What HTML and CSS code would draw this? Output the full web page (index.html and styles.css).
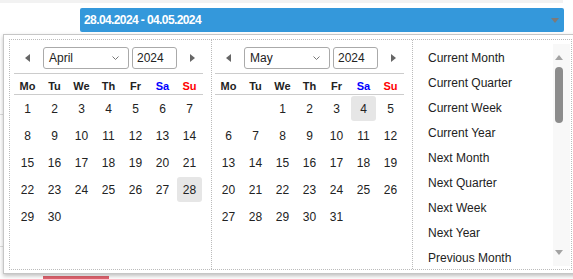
FILE: index.html
```html
<!DOCTYPE html>
<html lang="en">

<head>
  <meta charset="UTF-8">
  <meta name="viewport" content="width=device-width, initial-scale=1.0">
  <title>Date Range Picker</title>
  <link rel="stylesheet" href="styles.css">
</head>

<body>
  <div class="topbar"></div>
  <div class="range">
    <span class="range-text">28.04.2024 - 04.05.2024</span>
    <span class="range-caret"></span>
  </div>
  <div class="rows">
    <div class="row row-a"></div>
    <div class="row row-b"></div>
    <div class="btn-red"></div>
  </div>

  <!-- dropdown panel -->
  <div class="popup">
    <div class="frame">
      <div class="cal">
        <div class="nav">
          <span class="nav-btn"><span class="tri-left"></span></span>
          <div class="sel month">
            <span>April</span>
            <svg width="7" height="4" viewBox="0 0 7 4"><polyline points="0.5,0.5 3.5,3.5 6.5,0.5" fill="none" stroke="#777" stroke-width="1"/></svg>
          </div>
          <div class="sel year">2024</div>
          <span class="nav-btn next"><span class="tri-right"></span></span>
        </div>
        <div class="names">
          <span>Mo</span><span>Tu</span><span>We</span><span>Th</span><span>Fr</span><span class="sa">Sa</span><span class="su">Su</span>
        </div>
        <div class="days">
          <span>1</span><span>2</span><span>3</span><span>4</span><span>5</span><span>6</span><span>7</span>
          <span>8</span><span>9</span><span>10</span><span>11</span><span>12</span><span>13</span><span>14</span>
          <span>15</span><span>16</span><span>17</span><span>18</span><span>19</span><span>20</span><span>21</span>
          <span>22</span><span>23</span><span>24</span><span>25</span><span>26</span><span>27</span><span class="picked">28</span>
          <span>29</span><span>30</span>
        </div>
      </div>

      <div class="cal">
        <div class="nav">
          <span class="nav-btn"><span class="tri-left"></span></span>
          <div class="sel month">
            <span>May</span>
            <svg width="7" height="4" viewBox="0 0 7 4"><polyline points="0.5,0.5 3.5,3.5 6.5,0.5" fill="none" stroke="#777" stroke-width="1"/></svg>
          </div>
          <div class="sel year">2024</div>
          <span class="nav-btn next"><span class="tri-right"></span></span>
        </div>
        <div class="names">
          <span>Mo</span><span>Tu</span><span>We</span><span>Th</span><span>Fr</span><span class="sa">Sa</span><span class="su">Su</span>
        </div>
        <div class="days">
          <span></span><span></span><span>1</span><span>2</span><span>3</span><span class="picked">4</span><span>5</span>
          <span>6</span><span>7</span><span>8</span><span>9</span><span>10</span><span>11</span><span>12</span>
          <span>13</span><span>14</span><span>15</span><span>16</span><span>17</span><span>18</span><span>19</span>
          <span>20</span><span>21</span><span>22</span><span>23</span><span>24</span><span>25</span><span>26</span>
          <span>27</span><span>28</span><span>29</span><span>30</span><span>31</span>
        </div>
      </div>

      <div class="presets">
        <ul class="preset-list">
          <li>Current Month</li>
          <li>Current Quarter</li>
          <li>Current Week</li>
          <li>Current Year</li>
          <li>Next Month</li>
          <li>Next Quarter</li>
          <li>Next Week</li>
          <li>Next Year</li>
          <li>Previous Month</li>
        </ul>
        <div class="scroll">
          <span class="scroll-up"></span>
          <span class="scroll-thumb"></span>
          <span class="scroll-down"></span>
        </div>
      </div>
    </div>
  </div>
</body>

</html>
```

FILE: styles.css
```css
html,
body {
  margin: 0;
  padding: 0;
  overflow: hidden;
}

body {
  font-family: "Liberation Sans", Arial, sans-serif;
  color: #222;
  background: #fff;
}

.topbar {
  height: 3px;
  width: 563px;
  background: #f2f2f2;
}

.range {
  margin: 5px 0 0 80px;
  width: 484px;
  height: 24px;
  box-sizing: border-box;
  padding: 0 5px 0 4px;
  background: #3498db;
  border-radius: 2px;
  display: flex;
  align-items: center;
  justify-content: space-between;
  color: #fff;
}

.range-text {
  font-size: 12px;
  font-weight: bold;
  letter-spacing: -0.6px;
}

.range-caret {
  width: 0;
  height: 0;
  border-left: 4px solid transparent;
  border-right: 4px solid transparent;
  border-top: 5px solid #7d7a78;
}

/* page content behind the dropdown */
.row {
  border-bottom: 1px solid #ddd;
}

.row-a {
  height: 82px;
}

.row-b {
  height: 131px;
}

.btn-red {
  margin: 29px 0 0 43px;
  width: 66px;
  height: 4px;
  background: #e0636f;
}

/* dropdown */
.popup {
  position: absolute;
  top: 34px;
  left: 3px;
  padding: 4px 5px 3px;
  background: #fff;
  border: 1px solid #c6c6c6;
  box-shadow: 0 2px 4px rgba(0, 0, 0, 0.25);
}

.frame {
  display: flex;
  width: 561px;
  height: 229px;
  border: 1px dotted #bbb;
}

.cal {
  width: 189px;
  padding: 7px 8px 0 4px;
  border-right: 1px dotted #bbb;
}

.cal + .cal {
  padding-left: 3px;
}

.nav {
  display: flex;
  align-items: center;
  height: 22px;
  margin-bottom: 4px;
}

.nav-btn {
  width: 27px;
  height: 22px;
  display: flex;
  align-items: center;
  justify-content: center;
  flex-shrink: 0;
}

.nav-btn.next {
  width: 31px;
}

.tri-left,
.tri-right {
  width: 0;
  height: 0;
  border-top: 4px solid transparent;
  border-bottom: 4px solid transparent;
}

.tri-left {
  border-right: 5px solid #666;
}

.tri-right {
  border-left: 5px solid #666;
}

.sel {
  height: 22px;
  box-sizing: border-box;
  border: 1px solid #aaa;
  border-radius: 3px;
  font-size: 12px;
  line-height: 21px;
  color: #222;
  flex-shrink: 0;
}

.month {
  width: 86px;
  margin-left: 2px;
  padding: 0 9px 0 5px;
  display: flex;
  align-items: center;
  justify-content: space-between;
}

.year {
  width: 45px;
  margin-left: 3px;
  padding-left: 4px;
}

.names {
  display: grid;
  grid-template-columns: repeat(7, 27px);
  height: 17px;
  padding-top: 3px;
  border-top: 1px solid #ccc;
  border-bottom: 1px solid #ccc;
  font-size: 11px;
  font-weight: bold;
  line-height: 18px;
  text-align: center;
}

.names .sa {
  color: #0000ff;
}

.names .su {
  color: #ff0000;
}

.days {
  display: grid;
  grid-template-columns: repeat(7, 27px);
  grid-auto-rows: 27px;
  font-size: 12px;
  text-align: center;
}

.days span {
  margin: 1px;
  padding-top: 2px;
  height: 23px;
  line-height: 23px;
  border-radius: 3px;
}

.days .picked {
  background: #e6e6e6;
}

.presets {
  flex: 1;
  display: flex;
  min-width: 0;
}

.preset-list {
  flex: 1;
  list-style: none;
  margin: 0;
  padding: 6px 0 0 15px;
  overflow: hidden;
  font-size: 12px;
  color: #222;
}

.preset-list li {
  height: 25px;
  line-height: 25px;
  white-space: nowrap;
}

.scroll {
  width: 17px;
  margin: 4px 1px 3px 0;
  background: #f8f8f8;
  display: flex;
  flex-direction: column;
  align-items: flex-start;
}

.scroll-up,
.scroll-down {
  width: 0;
  height: 0;
  margin-left: 2px;
  border-left: 4.5px solid transparent;
  border-right: 4.5px solid transparent;
}

.scroll-up {
  margin-top: 11px;
  border-bottom: 5px solid #a3a3a3;
}

.scroll-thumb {
  width: 8px;
  height: 56px;
  margin: 7px 0 0 2px;
  border-radius: 4px;
  background: #8c8c8c;
}

.scroll-down {
  margin-top: auto;
  margin-bottom: 11px;
  border-top: 5px solid #a3a3a3;
}
```
